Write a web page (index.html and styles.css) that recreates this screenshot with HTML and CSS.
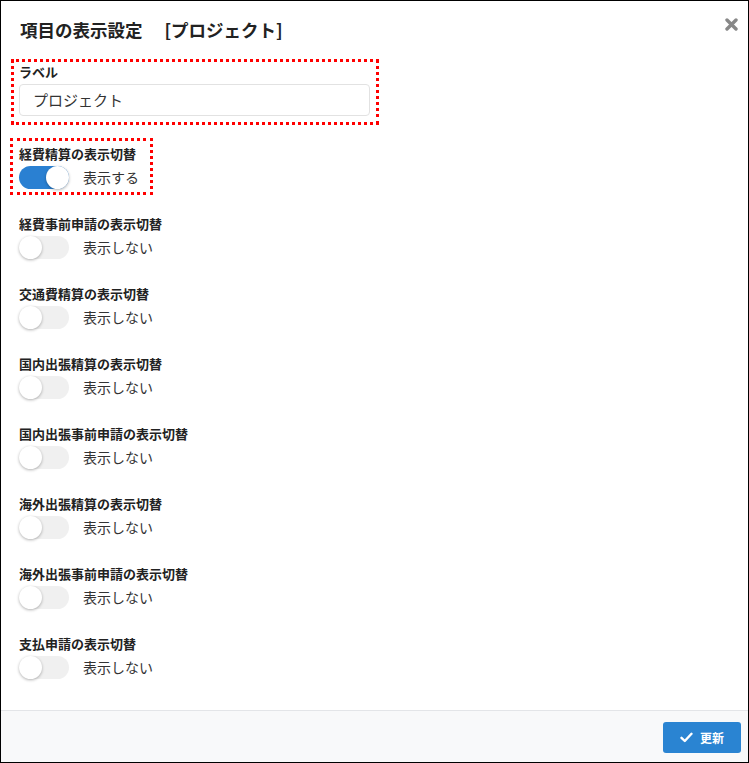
FILE: index.html
```html
<!DOCTYPE html>
<html lang="ja">
<head>
<meta charset="utf-8">
<link rel="stylesheet" href="styles.css">
</head>
<body>
<div class="modal">
  <div class="modal-header">
    <h1 class="title">項目の表示設定<span class="title-sub">[プロジェクト]</span></h1>
    <span class="close">
      <svg width="13" height="13" viewBox="0 0 13 13"><path d="M2 2 L11 11 M11 2 L2 11" stroke="#888" stroke-width="3.4" stroke-linecap="round"/></svg>
    </span>
  </div>
  <div class="modal-body">
    <div class="field field-text marked marked-a">
      <div class="label">ラベル</div>
      <div class="input">プロジェクト</div>
    </div>
    <div class="field marked marked-b">
      <div class="label">経費精算の表示切替</div>
      <div class="switch-row"><span class="switch on"><span class="knob"></span></span><span class="switch-text">表示する</span></div>
    </div>
    <div class="field">
      <div class="label">経費事前申請の表示切替</div>
      <div class="switch-row"><span class="switch"><span class="knob"></span></span><span class="switch-text">表示しない</span></div>
    </div>
    <div class="field">
      <div class="label">交通費精算の表示切替</div>
      <div class="switch-row"><span class="switch"><span class="knob"></span></span><span class="switch-text">表示しない</span></div>
    </div>
    <div class="field">
      <div class="label">国内出張精算の表示切替</div>
      <div class="switch-row"><span class="switch"><span class="knob"></span></span><span class="switch-text">表示しない</span></div>
    </div>
    <div class="field">
      <div class="label">国内出張事前申請の表示切替</div>
      <div class="switch-row"><span class="switch"><span class="knob"></span></span><span class="switch-text">表示しない</span></div>
    </div>
    <div class="field">
      <div class="label">海外出張精算の表示切替</div>
      <div class="switch-row"><span class="switch"><span class="knob"></span></span><span class="switch-text">表示しない</span></div>
    </div>
    <div class="field">
      <div class="label">海外出張事前申請の表示切替</div>
      <div class="switch-row"><span class="switch"><span class="knob"></span></span><span class="switch-text">表示しない</span></div>
    </div>
    <div class="field">
      <div class="label">支払申請の表示切替</div>
      <div class="switch-row"><span class="switch"><span class="knob"></span></span><span class="switch-text">表示しない</span></div>
    </div>
  </div>
  <div class="modal-footer">
    <button class="btn-update">
      <svg width="13" height="11" viewBox="0 0 13 11"><path d="M1.5 5.8 L4.8 9 L11.5 1.8" fill="none" stroke="#fff" stroke-width="2.4" stroke-linecap="round" stroke-linejoin="round"/></svg>
      <span>更新</span>
    </button>
  </div>
</div>
</body>
</html>
```

FILE: styles.css
```css
html, body {
  margin: 0;
  padding: 0;
  background: #fff;
}
body {
  font-family: "Noto Sans CJK JP", "Noto Sans", sans-serif;
  color: #333;
}
.modal {
  width: 749px;
  height: 763px;
  box-sizing: border-box;
  border: 1px solid #000;
  display: flex;
  flex-direction: column;
}
.modal-header {
  position: relative;
  padding: 17px 19px 0 19px;
  height: 40px;
}
.title {
  margin: 0;
  font-size: 17.5px;
  line-height: 24px;
  font-weight: bold;
  color: #222;
}
.title-sub {
  margin-left: 22px;
}
.close {
  position: absolute;
  right: 10px;
  top: 11px;
}
.modal-body {
  flex: 1;
  padding: 5px 18px 0 18px;
}
.field {
  position: relative;
  height: 70px;
}
.field-text {
  height: 82px;
}
.marked::after {
  content: "";
  position: absolute;
  border: 3px dotted #f00;
}
.marked-a::after {
  left: -8px;
  top: -4px;
  width: 362px;
  height: 60px;
}
.marked-b::after {
  left: -9px;
  top: -7px;
  width: 137px;
  height: 51px;
}
.label {
  font-size: 13px;
  font-weight: bold;
  line-height: 18px;
  color: #222;
}
.input {
  margin-top: 3px;
  width: 351px;
  height: 32px;
  box-sizing: border-box;
  border: 1px solid #e2e2e2;
  border-radius: 4px;
  padding-left: 13px;
  font-size: 15px;
  line-height: 30px;
  color: #333;
}
.switch-row {
  margin-top: 2px;
  display: flex;
  align-items: center;
  height: 24px;
}
.switch {
  position: relative;
  width: 50px;
  height: 23px;
  border-radius: 12px;
  background: #f0f0f0;
  box-sizing: border-box;
}
.switch.on {
  background: #2a80d2;
}
.knob {
  position: absolute;
  top: 0;
  left: 0;
  width: 23px;
  height: 23px;
  border-radius: 50%;
  background: #fff;
  box-shadow: 0 1px 3px rgba(0,0,0,0.3);
}
.switch.on .knob {
  left: 27px;
}
.switch-text {
  margin-left: 14px;
  font-size: 14px;
  color: #333;
}
.modal-footer {
  height: 52px;
  box-sizing: border-box;
  border-top: 1px solid #e3e5e8;
  background: #f8f9fa;
  display: flex;
  justify-content: flex-end;
  align-items: flex-start;
  padding: 11px 7px 0 0;
}
.btn-update {
  width: 78px;
  height: 31px;
  border: none;
  border-radius: 3px;
  background: #2a84d2;
  color: #fff;
  font-family: "Noto Sans CJK JP", sans-serif;
  font-size: 12px;
  font-weight: bold;
  display: flex;
  align-items: center;
  justify-content: center;
  gap: 7px;
  padding: 0;
}
```
